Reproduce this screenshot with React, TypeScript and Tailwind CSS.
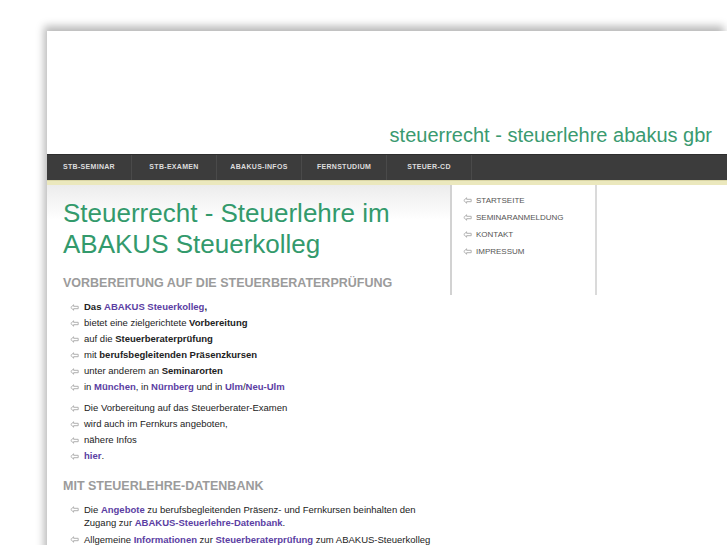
import React from 'react';

const navItems = ['STB-SEMINAR', 'STB-EXAMEN', 'ABAKUS-INFOS', 'FERNSTUDIUM', 'STEUER-CD'];
const sideItems = ['STARTSEITE', 'SEMINARANMELDUNG', 'KONTAKT', 'IMPRESSUM'];

function Arrow() {
  return (
    <svg width="9" height="7" viewBox="0 0 9 7" className="shrink-0">
      <path d="M0.8 3.5 L3.6 0.8 V2.3 H8.2 V4.7 H3.6 V6.2 Z" fill="none" stroke="#a8a8a8" strokeWidth="0.9" strokeLinejoin="round" />
    </svg>
  );
}

function A({ children }: { children: React.ReactNode }) {
  return <span className="font-bold text-[#5b3ea3]">{children}</span>;
}

function Li({ children, tight }: { children: React.ReactNode; tight?: boolean }) {
  return (
    <li className={`flex items-start gap-[5px] ${tight ? 'mb-[4px] leading-[13px]' : 'leading-[16px]'}`}>
      <span className={tight ? 'pt-[3px]' : 'pt-[5px]'}><Arrow /></span>
      <span>{children}</span>
    </li>
  );
}

export default function App(): JSX.Element {
  return (
    <div className="min-h-screen bg-white overflow-hidden font-['Liberation_Sans',Arial,sans-serif]">
      <div className="ml-[47px] mt-[31px] bg-white shadow-[-3px_-5px_8px_rgba(0,0,0,0.28)]">
        <header className="h-[123px] flex items-end justify-end pr-[15px] pb-[7px]">
          <h2 className="text-[20px] leading-[24px] text-[#3a9a70]">steuerrecht - steuerlehre abakus gbr</h2>
        </header>

        <nav className="h-[26px] bg-[#3c3c3c] flex border-t border-[#2e2e2e]">
          {navItems.map((n) => (
            <div key={n} className="w-[85px] border-r border-[#4a4a4a] flex items-center justify-center text-[7px] font-bold tracking-[0.3px] text-[#dcdcdc]">
              {n}
            </div>
          ))}
        </nav>
        <div className="h-[5px] bg-[#ebe8bd] border-t border-[#d9d5a5]" />

        <div className="flex">
          <main className="w-[403px] bg-gradient-to-b from-[#ececec] via-white via-[35px] to-white pl-[16px] pb-[20px]">
            <h1 className="pt-[13px] text-[26px] leading-[31px] text-[#339a6c]">
              Steuerrecht - Steuerlehre im<br />ABAKUS Steuerkolleg
            </h1>
            <h3 className="mt-[15px] text-[12.5px] font-bold text-[#9b9b9b] leading-[16px]">VORBEREITUNG AUF DIE STEUERBERATERPRÜFUNG</h3>

            <ul className="mt-[8px] pl-[7px] text-[9.5px] text-[#222]">
              <Li><b>Das</b> <A>ABAKUS Steuerkolleg</A><b>,</b></Li>
              <Li>bietet eine zielgerichtete <b>Vorbereitung</b></Li>
              <Li>auf die <b>Steuerberaterprüfung</b></Li>
              <Li>mit <b>berufsbegleitenden Präsenzkursen</b></Li>
              <Li>unter anderem an <b>Seminarorten</b></Li>
              <Li>in <A>München</A>, in <A>Nürnberg</A> und in <A>Ulm</A>/<A>Neu-Ulm</A></Li>
            </ul>
            <ul className="mt-[5px] pl-[7px] text-[9.5px] text-[#222]">
              <Li>Die Vorbereitung auf das Steuerberater-Examen</Li>
              <Li>wird auch im Fernkurs angeboten,</Li>
              <Li>nähere Infos</Li>
              <Li><A>hier</A>.</Li>
            </ul>

            <h3 className="mt-[14px] text-[12.5px] font-bold text-[#9b9b9b] leading-[16px]">MIT STEUERLEHRE-DATENBANK</h3>
            <ul className="mt-[9px] pl-[7px] pr-[12px] text-[9.5px] text-[#222]">
              <Li tight>Die <A>Angebote</A> zu berufsbegleitenden Präsenz- und Fernkursen beinhalten den Zugang zur <A>ABAKUS-Steuerlehre-Datenbank</A>.</Li>
              <Li tight><span className="whitespace-nowrap">Allgemeine <A>Informationen</A> zur <A>Steuerberaterprüfung</A> zum ABAKUS-Steuerkolleg</span></Li>
            </ul>
          </main>

          <aside className="w-[147px] h-[110px] border-l-2 border-l-[#d2d2d2] border-r-2 border-r-[#dadada] bg-white pl-[11px] pt-[7px]">
            <ul className="text-[8px] text-[#555]">
              {sideItems.map((s) => (
                <li key={s} className="flex items-center gap-[4px] h-[17px]">
                  <Arrow />
                  <span>{s}</span>
                </li>
              ))}
            </ul>
          </aside>
        </div>
      </div>
    </div>
  );
}
